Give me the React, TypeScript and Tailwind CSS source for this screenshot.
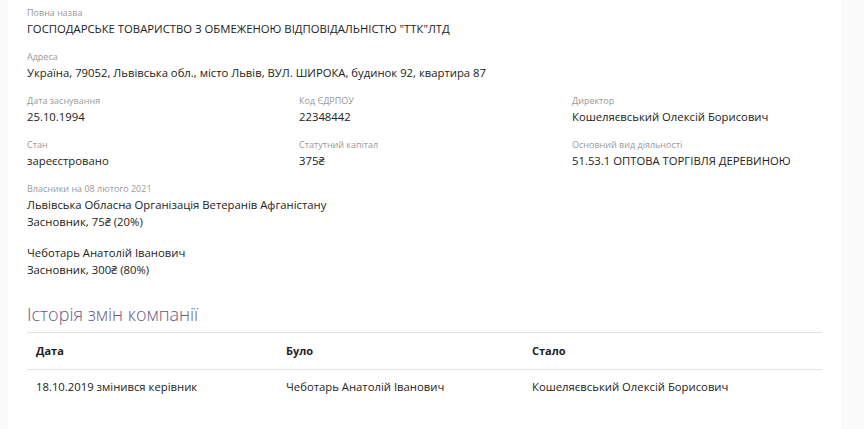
import React from 'react';

interface Field {
  label: string;
  value: string;
}

const rows: Field[][] = [
  [
    { label: 'Дата заснування', value: '25.10.1994' },
    { label: 'Код ЄДРПОУ', value: '22348442' },
    { label: 'Директор', value: 'Кошеляєвський Олексій Борисович' },
  ],
  [
    { label: 'Стан', value: 'зареєстровано' },
    { label: 'Статутний капітал', value: '375₴' },
    { label: 'Основний вид діяльності', value: '51.53.1 ОПТОВА ТОРГІВЛЯ ДЕРЕВИНОЮ' },
  ],
];

const owners = [
  { name: 'Львівська Обласна Організація Ветеранів Афганістану', role: 'Засновник, 75₴ (20%)' },
  { name: 'Чеботарь Анатолій Іванович', role: 'Засновник, 300₴ (80%)' },
];

const Label = ({ children }: { children: React.ReactNode }) => (
  <div className="text-[9px] leading-[14px] text-[#999]">{children}</div>
);

const Value = ({ children }: { children: React.ReactNode }) => (
  <div className="text-[11.3px] leading-[17px] text-[#222]">{children}</div>
);

export default function App() {
  return (
    <div
      className="min-h-[429px] bg-[#fafafa] pl-2 pr-[23px]"
      style={{ fontFamily: '"Open Sans", "Noto Sans", sans-serif' }}
    >
      <div className="min-h-[429px] bg-white pl-[19px] pr-[19px] pt-[6px]">
        {/* Full name */}
        <div>
          <Label>Повна назва</Label>
          <Value>ГОСПОДАРСЬКЕ ТОВАРИСТВО З ОБМЕЖЕНОЮ ВІДПОВІДАЛЬНІСТЮ "ТТК"ЛТД</Value>
        </div>

        {/* Address */}
        <div className="mt-[13px]">
          <Label>Адреса</Label>
          <Value>Україна, 79052, Львівська обл., місто Львів, ВУЛ. ШИРОКА, будинок 92, квартира 87</Value>
        </div>

        {/* Details grid */}
        {rows.map((row, i) => (
          <div key={i} className="mt-[13px] grid grid-cols-[272px_273px_1fr]">
            {row.map((f) => (
              <div key={f.label}>
                <Label>{f.label}</Label>
                <Value>{f.value}</Value>
              </div>
            ))}
          </div>
        ))}

        {/* Owners */}
        <div className="mt-[13px]">
          <Label>Власники на 08 лютого 2021</Label>
          {owners.map((o, i) => (
            <div key={o.name} className={i > 0 ? 'mt-[14px]' : ''}>
              <Value>{o.name}</Value>
              <Value>{o.role}</Value>
            </div>
          ))}
        </div>

        {/* History */}
        <h2 className="mt-[23px] text-[18px] font-light leading-[26px] text-[#6b5685]">
          Історія змін компанії
        </h2>
        <table className="mt-[5px] w-full table-fixed border-collapse text-[11.3px] text-[#222]">
          <colgroup>
            <col className="w-[250px]" />
            <col className="w-[246px]" />
            <col />
          </colgroup>
          <thead>
            <tr className="border-t border-b border-[#e2e2e2]">
              <th className="h-[37px] px-[9px] text-left text-[11px] font-bold">Дата</th>
              <th className="h-[37px] px-[9px] text-left text-[11px] font-bold">Було</th>
              <th className="h-[37px] px-[9px] text-left text-[11px] font-bold">Стало</th>
            </tr>
          </thead>
          <tbody>
            <tr>
              <td className="h-[36px] px-[9px]">18.10.2019 змінився керівник</td>
              <td className="h-[36px] px-[9px]">Чеботарь Анатолій Іванович</td>
              <td className="h-[36px] px-[9px]">Кошеляєвський Олексій Борисович</td>
            </tr>
          </tbody>
        </table>
      </div>
    </div>
  );
}
